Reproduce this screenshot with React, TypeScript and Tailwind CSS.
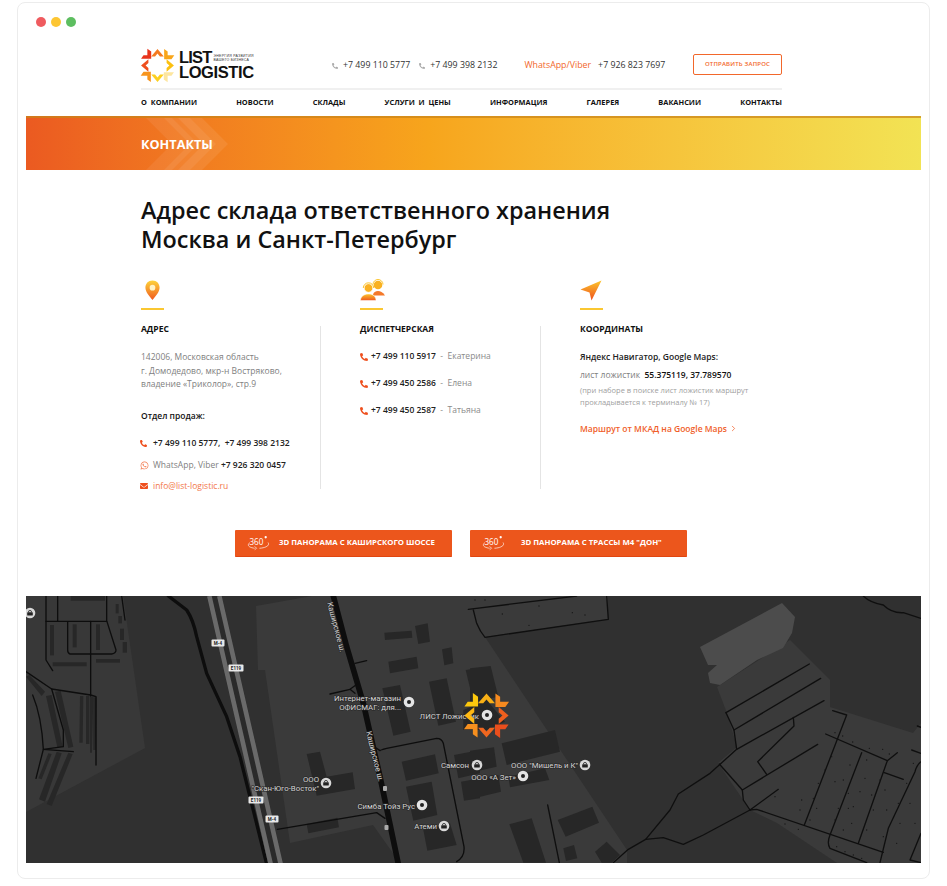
import { ChevronRight } from "lucide-react";
import { FaEnvelope, FaPhoneAlt, FaWhatsapp } from "react-icons/fa";

const chevron = "50,3 68,24 57,24 50,16 43,24 32,24";
const corner = "69,3 79,10 79,21 98,21 90,32 69,32";

// order: top, top-right, right, bottom-right, bottom, bottom-left, left, top-left
const headerColors = ["#f47a20", "#f9a51a", "#fcc010", "#fde6a0", "#fcd020", "#f7941d", "#ee4f1e", "#e8341c"];
const mapColors = ["#f9b016", "#f68a1f", "#ee5f1e", "#ea4e1c", "#ef661f", "#f68f1e", "#fdb813", "#fcc80d"];

const Sun = ({ colors, className }: { colors: string[]; className: string }) => (
  <svg viewBox="0 0 100 100" className={className}>
    {colors.map((c, i) => (
      <polygon
        key={i}
        points={i % 2 === 0 ? chevron : corner}
        fill={c}
        transform={`rotate(${i % 2 === 0 ? i * 45 : (i - 1) * 45} 50 50)`}
      />
    ))}
  </svg>
);

const PinIcon = () => (
  <svg viewBox="0 0 18 22" className="w-[17px] h-[21px] ml-[3px]">
    <defs>
      <linearGradient id="pin" x1="0" y1="0" x2="0" y2="1">
        <stop offset="0" stopColor="#fdd33a" />
        <stop offset="1" stopColor="#f0591e" />
      </linearGradient>
    </defs>
    <path d="M9 0.5C4.4 0.5 1.5 4 1.5 8c0 4.5 4.7 9.5 7.5 13 2.8-3.5 7.500-8.500 7.500-13 0-4-2.900-7.500-7.500-7.500z" fill="url(#pin)" />
    <circle cx="9" cy="8" r="3" fill="#fff3c4" />
  </svg>
);

const OperatorsIcon = () => (
  <svg viewBox="0 0 26 22" className="w-[26px] h-[22px]">
    <defs>
      <linearGradient id="op" x1="0" y1="0" x2="0" y2="1">
        <stop offset="0" stopColor="#fcc52c" />
        <stop offset="1" stopColor="#ef571d" />
      </linearGradient>
    </defs>
    <circle cx="18" cy="6" r="4.300" fill="#f9b120" />
    <path d="M13 5.500a5 5 0 0 1 10 0" fill="none" stroke="#fcc52c" strokeWidth="1" />
    <path d="M13 16c.5-3 2.500-4 5-4s4.500 1 7 4.500H13z" fill="#f4792a" />
    <circle cx="8.500" cy="9" r="4.300" fill="#fab122" stroke="#fff" strokeWidth=".7" />
    <path d="M3.300 9a5.200 5.200 0 0 1 10.400 0" fill="none" stroke="#fcc52c" strokeWidth="1" />
    <path d="M0.500 21.500c0-4 3.500-6.500 8-6.500s7.500 2.500 7.500 6.500z" fill="url(#op)" stroke="#fff" strokeWidth=".5" />
  </svg>
);

const ArrowIcon = () => (
  <svg viewBox="0 0 22 21" className="w-[22px] h-[21px]">
    <defs>
      <linearGradient id="arr" x1="0" y1="0" x2="0" y2="1">
        <stop offset="0" stopColor="#fcc52c" />
        <stop offset="1" stopColor="#ef4f1d" />
      </linearGradient>
    </defs>
    <path d="M21.500 0.500L0.500 9.500l9 3 2 8z" fill="url(#arr)" />
  </svg>
);

const Icon360 = () => (
  <svg viewBox="0 0 24 16" className="w-[23px] h-[16px]">
    <text x="2.500" y="10" fontSize="8.500" fontWeight="400" fill="#fff" fontFamily="'Open Sans', sans-serif">360</text>
    <circle cx="19.500" cy="2" r="1.200" fill="#fff" />
    <path d="M3 7.500C0 10 1 12.500 8 13.500M13 13.500c7-.5 11-3 9-6" fill="none" stroke="#fff" strokeWidth=".7" />
    <path d="M8 11.500l2 2-2 1.500" fill="none" stroke="#fff" strokeWidth=".7" />
  </svg>
);

const PhoneLine = ({ num, name }: { num: string; name: string }) => (
  <div className="flex items-center h-[27px]">
    <FaPhoneAlt className="w-[8px] h-[8px] text-[#ee4f1d]" />
    <span className="ml-[3px] text-[8.5px] font-semibold text-[#222]">{num}</span>
    <span className="text-[8.5px] text-[#8a8a8a] whitespace-pre">{"  -  " + name}</span>
  </div>
);

const ContactColumnTitle = ({ icon, title }: { icon: React.ReactNode; title: string }) => (
  <>
    <div className="h-[22px] flex items-center">{icon}</div>
    <div className="w-[23px] h-[2px] bg-[#fac731] mt-[7px]" />
    <div className="text-[8.500px] font-bold text-[#111] mt-[12px] leading-[14px]">{title}</div>
  </>
);

const block = "#272727";
const road = "#0d0d0d";

const leftBuildings = [
  "1153,128 1235,122 1237,143 1155,150",
  "1245,108 1283,100 1290,155 1255,162",
  "1326,178 1355,172 1360,220 1333,226",
  "1165,215 1250,200 1255,235 1170,250",
  "1147,295 1200,285 1232,425 1180,437",
  "1287,275 1340,265 1368,395 1315,407",
  "1397,240 1440,233 1440,330 1420,335",
  "1205,515 1305,493 1316,550 1218,572",
  "1218,590 1295,575 1312,675 1240,692",
  "1270,720 1350,700 1370,765 1282,782",
  "920,492 960,485 980,560 1058,547 1065,597 950,617",
  "920,702 1012,683 1017,712 925,730",
  "1362,495 1440,480 1440,550 1375,565",
  "1383,575 1440,565 1440,625 1392,632",
  "150,105 162,105 162,196 150,196",
  "218,103 230,103 230,172 218,172",
  "288,103 300,103 300,180 288,180",
  "158,217 260,217 260,229 158,229",
  "288,207 360,207 360,218 288,218",
  "347,42 356,42 356,70 347,70",
  "355,78 366,78 366,100 355,100",
  "360,116 372,116 372,150 360,150",
  "368,156 381,156 381,188 368,188",
  "212,18 315,18 315,32 212,32",
  "78,260 88,255 135,305 125,318",
  "138,318 155,315 188,470 172,472",
  "165,305 182,302 220,470 205,474",
  "240,318 250,318 248,458 238,458",
  "258,318 268,318 268,462 258,462",
  "270,320 280,320 276,488 270,488",
  "280,322 290,322 287,480 280,480",
  "145,490 155,492 125,568 115,565",
  "170,485 185,490 135,635 117,628",
  "205,488 218,492 155,648 140,642",
];

const rightBuildings = [
  "0,235 62,228 85,320 0,338",
  "95,460 255,420 270,485 110,525",
  "115,560 225,535 238,570 120,592",
  "0,570 85,555 93,605 0,628",
  "118,703 185,685 228,818 160,818",
  "263,690 367,650 387,698 287,740",
  "280,775 312,765 322,805 288,813",
  "375,785 410,755 450,795 425,818 395,818",
  "0,482 72,472 80,530 0,548",
  "-20,360 50,330 105,395 50,420 -20,420",
];

const rightRoads = [
  "M-5,58 L320,18",
  "M410,18 L415,88 L45,142 Q30,125 20,100 L10,60",
  "M233,645 L268,818",
  "M430,818 L475,778 L527,748 L600,660 L625,612 L720,550 L800,478 L1062,332",
  "M768,368 L1018,222",
  "M792,420 L1052,265",
  "M768,368 L792,420 L800,478",
  "M970,382 L972,408 L863,515 L890,553",
  "M748,522 L817,600 L1043,463",
  "M817,600 L820,630 L840,660 L925,598",
  "M527,748 L580,743 L640,763 L700,735 L840,660",
  "M840,660 L860,658 L1240,787",
  "M1088,362 L1130,375 L1003,705",
  "M1067,432 L1252,512 L1165,760",
  "M1175,488 L1080,735 Q1070,760 1080,775 L1190,818",
  "M1252,512 L1282,488",
  "M1243,548 L1300,568",
  "M1325,480 L1353,490",
  "M1353,515 Q1340,525 1335,545 L1255,715 L1230,818",
  "M1342,408 L1353,412",
  "M1353,730 L1320,810 L1353,818",
  "M1180,18 Q1200,38 1240,45 Q1265,70 1300,68 L1353,85",
];

const rightDots: number[][] = [
  [15, 30], [45, 30], [97, 72], [207, 48], [307, 68], [345, 75], [177, 106],
  [915, 620], [995, 630], [990, 660], [945, 702], [985, 718], [1095, 428], [1118, 438], [1148, 456],
  [1198, 475], [1238, 478], [1258, 492], [1085, 500], [1065, 540], [1045, 580], [1030, 625], [1040, 655], [1020, 690],
  [1140, 525], [1120, 570], [1095, 575], [1135, 610], [1105, 655], [1135, 655], [1095, 690], [1120, 720],
  [1190, 510], [1185, 565], [1170, 605], [1150, 650], [1145, 700], [1205, 615], [1230, 570], [1245, 600], [1210, 660],
  [1190, 720], [1250, 660], [1240, 740], [1285, 640], [1310, 580], [1330, 520], [1320, 640], [1290, 700], [1335, 700],
  [1100, 770], [1125, 785], [1150, 795], [1175, 805], [1280, 760],
];

const MapSign = ({ x, y, w, label }: { x: number; y: number; w: number; label: string }) => (
  <g>
    <rect x={x - w / 2} y={y - 3.500} width={w} height={7} rx="1" fill="#e8e8e8" />
    <text x={x} y={y + 1.800} textAnchor="middle" fontSize="4.500" fontWeight="700" fill="#222">{label}</text>
  </g>
);

const MapDot = ({ x, y }: { x: number; y: number }) => (
  <g>
    <circle cx={x} cy={y} r="5.300" fill="#e4e4e4" />
    <circle cx={x} cy={y} r="2" fill="#222" />
  </g>
);

const MapBag = ({ x, y }: { x: number; y: number }) => (
  <g>
    <circle cx={x} cy={y} r="5.300" fill="#d8d8d8" />
    <rect x={x - 2.800} y={y - 0.800} width="5.600" height="3.400" rx=".6" fill="#222" />
    <path d={`M${x - 1.600} ${y - 0.800}a1.600 1.800 0 0 1 3.200 0`} fill="none" stroke="#222" strokeWidth=".8" />
  </g>
);

const MapLabel = ({ x, y, anchor, rotate, children }: { x: number; y: number; anchor?: "start" | "middle" | "end"; rotate?: number; children: string }) => (
  <text
    x={x}
    y={y}
    textAnchor={anchor ?? "end"}
    fontSize="7.800"
    fill="#d4d4d4"
    stroke="#262626"
    strokeWidth="1.200"
    paintOrder="stroke"
    transform={rotate ? `rotate(${rotate} ${x} ${y})` : undefined}
  >
    {children}
  </text>
);

const MapDrawing = () => (
  <svg viewBox="26 596 895 267" className="block w-full h-full" fontFamily="Roboto, sans-serif">
    <rect x="26" y="596" width="895" height="267" fill="#303030" />
    {/* land areas */}
    <polygon points="26,596 123,596 145,748 26,812" fill="#383838" />
    <polygon points="256,606 312,596 608,596 608,619 485,637 627,850 627,863 400,863 373,825 290,843 265,670 258,670" fill="#3a3a3a" />
    <polygon points="790,640 830,680 830,707 913,733 921,723 921,863 837,863 777,823 750,810 718,763 737,747 727,713 717,687" fill="#3a3a3a" />
    <polygon points="700,647 782,603 795,617 792,633 783,648 757,660 720,685 710,683 708,673 717,665 708,665" fill="#4c4c4c" />

    <g transform="translate(0 590) scale(.33333)">
      {leftBuildings.map((p) => (
        <polygon key={p} points={p} fill={block} />
      ))}
      <g fill="none" stroke={road} strokeLinecap="round" strokeLinejoin="round">
        <path d="M505,18 L560,60 Q580,90 590,140 L620,250 L680,380 L720,500 L800,822" strokeWidth="10" />
        <path d="M1000,18 L1040,170 L1090,340 L1140,560 L1195,822" strokeWidth="17" />
        <g strokeWidth="4">
          <path d="M1065,220 L1100,212" />
          <path d="M990,312 L1050,298 L1075,280" />
          <path d="M1050,298 L1065,310" />
          <path d="M832,718 L1130,668 L1155,685" />
          <path d="M1115,465 L1140,482 Q1140,480 1160,475 L1310,445 Q1325,445 1330,460 L1392,770 Q1395,800 1370,815" />
          <path d="M138,18 V210 L158,242" />
          <path d="M173,18 V92" />
          <path d="M138,94 H320" />
          <path d="M320,18 V92 L348,180 Q348,190 335,192 H210 Q203,190 203,180 V95" />
          <path d="M272,94 V318" />
          <path d="M365,18 L375,90" />
          <path d="M78,245 L155,297 L272,315 L288,320 V525" />
          <path d="M155,297 L190,420 L190,470 L130,478 L108,565" />
          <path d="M98,315 Q125,380 130,478 L220,485" />
        </g>
      </g>
      {/* highway */}
      <path d="M643,18 L827,822" stroke="#2a2a2a" strokeWidth="44" fill="none" />
      <path d="M628,18 L812,822" stroke="#6a6a6a" strokeWidth="14" fill="none" />
      <path d="M658,18 L842,822" stroke="#6a6a6a" strokeWidth="14" fill="none" />
    </g>

    <g transform="translate(470 590) scale(.33333)">
      {rightBuildings.map((p) => (
        <polygon key={p} points={p} fill={block} />
      ))}
      <g fill="none" stroke="#0f0f0f" strokeWidth="4" strokeLinecap="round" strokeLinejoin="round">
        {rightRoads.map((d) => (
          <path key={d} d={d} />
        ))}
      </g>
      {rightDots.map(([x, y]) => (
        <circle key={`${x}-${y}`} cx={x} cy={y} r="2" fill="#151515" />
      ))}
    </g>

    <MapSign x={218} y={643} w={13} label="M-4" />
    <MapSign x={236} y={668} w={15} label="E119" />
    <MapSign x={256} y={800} w={15} label="E119" />
    <MapSign x={272} y={819} w={13} label="M-4" />
    <g>
      <rect x="383" y="786" width="4" height="5" rx="1" fill="#aaa" />
      <rect x="384.500" y="825" width="4" height="5" rx="1" fill="#aaa" />
    </g>

    <MapLabel x={327} y={603} anchor="start" rotate={75}>Каширское ш.</MapLabel>
    <MapLabel x={366} y={732} anchor="start" rotate={76}>Каширское ш.</MapLabel>
    <MapLabel x={401} y={701}>Интернет-магазин</MapLabel>
    <MapLabel x={401} y={710}>ОФИСМАГ: для...</MapLabel>
    <MapLabel x={479} y={719}>ЛИСТ Ложистик</MapLabel>
    <MapLabel x={469} y={768}>Самсон</MapLabel>
    <MapLabel x={578} y={768}>ООО "Мишель и К"</MapLabel>
    <MapLabel x={516} y={780}>ООО «А Зет»</MapLabel>
    <MapLabel x={319} y={782}>ООО</MapLabel>
    <MapLabel x={319} y={791}>"Скан-Юго-Восток"</MapLabel>
    <MapLabel x={415} y={809}>Симба Тойз Рус</MapLabel>
    <MapLabel x={437} y={829}>Атеми</MapLabel>
    <MapDot x={409} y={702} />
    <MapDot x={487} y={715} />
    <MapDot x={523} y={776} />
    <MapDot x={422} y={805} />
    <MapBag x={326} y={783} />
    <MapBag x={477} y={765} />
    <MapBag x={585} y={765} />
    <MapBag x={444} y={826} />
    <MapBag x={30} y={613} />
  </svg>
);

export default function App() {
  return (
    <div className="w-[947px] h-[886px] bg-white pt-[2px] pl-[17px] overflow-hidden font-['Open_Sans',sans-serif]">
      <div className="w-[913px] h-[877px] border border-[#ececec] rounded-[8px] px-[8px] relative">
        {/* window dots */}
        <div className="flex gap-[5px] ml-[10px] pt-[14px] h-[38px]">
          <div className="w-[10px] h-[10px] rounded-full bg-[#ef5b5f]" />
          <div className="w-[10px] h-[10px] rounded-full bg-[#fdc633]" />
          <div className="w-[10px] h-[10px] rounded-full bg-[#5dbe60]" />
        </div>

        {/* header */}
        <div className="ml-[115px] w-[641px]">
          <div className="flex items-start h-[47px] pt-[7px]">
            <Sun colors={headerColors} className="w-[35px] h-[35px] shrink-0 ml-[-1px]" />
            <div className="ml-[4px] mt-[2px] font-['Liberation_Sans',sans-serif] font-bold text-[#111] text-[16.500px] leading-[15px] w-[76px] shrink-0">
              <div className="flex items-center">
                <span className="tracking-[-0.8px]">LIST</span>
                <div className="ml-[2px] text-[3.500px] leading-[4px] tracking-[.25px] font-normal whitespace-nowrap text-[#333]">
                  <div>ЭНЕРГИЯ РАЗВИТИЯ</div>
                  <div>ВАШЕГО БИЗНЕСА</div>
                </div>
              </div>
              <div className="tracking-[-0.4px]">LOGISTIC</div>
            </div>
            <div className="ml-[77px] flex items-center h-[24px] mt-[6px] text-[8.800px] text-[#333] whitespace-nowrap">
              <FaPhoneAlt className="w-[6px] h-[6px] text-[#aaa] mr-[5px]" />
              <span>+7 499 110 5777</span>
              <FaPhoneAlt className="w-[6px] h-[6px] text-[#aaa] ml-[9px] mr-[5px]" />
              <span>+7 499 398 2132</span>
              <span className="ml-[27px] text-[#f2672b]">WhatsApp/Viber</span>
              <span className="ml-[7px]">+7 926 823 7697</span>
            </div>
            <div className="ml-auto mt-[6px] w-[89px] h-[21px] border-[1.500px] border-[#f2672b] rounded-[2px] flex items-center justify-center text-[6px] font-semibold text-[#f2672b] tracking-[.2px] whitespace-nowrap">
              ОТПРАВИТЬ ЗАПРОС
            </div>
          </div>
          <div className="h-[2px] bg-[#f0f0f0]" />
          <div className="flex justify-between items-center h-[26px] text-[7.400px] font-bold text-[#111] whitespace-pre">
            <span>О  КОМПАНИИ</span>
            <span>НОВОСТИ</span>
            <span>СКЛАДЫ</span>
            <span>УСЛУГИ  И  ЦЕНЫ</span>
            <span>ИНФОРМАЦИЯ</span>
            <span>ГАЛЕРЕЯ</span>
            <span>ВАКАНСИИ</span>
            <span>КОНТАКТЫ</span>
          </div>
        </div>

        {/* banner */}
        <div className="relative h-[54px] bg-gradient-to-r from-[#eb5a21] via-[#f7a51c] via-45% to-[#f2e354] border-t-[2px] border-t-[#c9851a]/70 overflow-hidden">
          <svg viewBox="0 0 120 54" className="absolute left-[115px] top-[-1px] w-[120px] h-[54px]">
            <polygon points="4,0 30,0 57,27 30,54 4,54 31,27" fill="#fff" fillOpacity=".07" />
            <polygon points="22,0 48,0 75,27 48,54 22,54 49,27" fill="#fff" fillOpacity=".07" />
            <polygon points="36,0 60,0 87,27 60,54 36,54 63,27" fill="#fff" fillOpacity=".08" />
          </svg>
          <div className="relative ml-[115px] h-full flex items-center text-[12.700px] font-bold text-white leading-none">КОНТАКТЫ</div>
        </div>

        {/* content */}
        <div className="ml-[115px] w-[641px]">
          <h1 className="mt-[26px] text-[23.400px] leading-[29px] font-semibold text-[#111]">
            Адрес склада ответственного хранения
            <br />
            Москва и Санкт-Петербург
          </h1>

          <div className="flex mt-[25px] h-[210px]">
            <div className="w-[179px] shrink-0">
              <ContactColumnTitle icon={<PinIcon />} title="АДРЕС" />
              <div className="mt-[14px] text-[8.500px] leading-[13.500px] text-[#808080]">
                142006, Московская область
                <br />
                г. Домодедово, мкр-н Востряково,
                <br />
                владение «Триколор», стр.9
              </div>
              <div className="mt-[18px] text-[8.500px] font-semibold text-[#111] leading-[13px]">Отдел продаж:</div>
              <div className="mt-[15px] flex items-center h-[13px] ml-[-1px]">
                <FaPhoneAlt className="w-[7px] h-[7px] text-[#ee4f1d] mr-[6px]" />
                <span className="text-[8.500px] font-semibold text-[#222] whitespace-pre">+7 499 110 5777,  +7 499 398 2132</span>
              </div>
              <div className="mt-[9px] flex items-center h-[13px] ml-[-1px]">
                <FaWhatsapp className="w-[9px] h-[9px] text-[#f2774a] mr-[4px]" />
                <span className="text-[8.500px] text-[#808080] whitespace-pre">WhatsApp, Viber </span>
                <span className="text-[8.500px] font-semibold text-[#222]">+7 926 320 0457</span>
              </div>
              <div className="mt-[8px] flex items-center h-[13px] ml-[-1px]">
                <FaEnvelope className="w-[8px] h-[8px] text-[#ee4f1d] mr-[5px]" />
                <span className="text-[8.500px] text-[#f2774a]">info@list-logistic.ru</span>
              </div>
            </div>

            <div className="w-[220px] shrink-0 relative pl-[40px]">
              <div className="absolute left-0 top-[47px] bottom-[0px] w-[1px] bg-[#e4e4e4]" />
              <ContactColumnTitle icon={<OperatorsIcon />} title="ДИСПЕТЧЕРСКАЯ" />
              <div className="mt-[7px]">
                <PhoneLine num="+7 499 110 5917" name="Екатерина" />
                <PhoneLine num="+7 499 450 2586" name="Елена" />
                <PhoneLine num="+7 499 450 2587" name="Татьяна" />
              </div>
            </div>

            <div className="flex-1 relative pl-[40px]">
              <div className="absolute left-0 top-[47px] bottom-[0px] w-[1px] bg-[#e4e4e4]" />
              <ContactColumnTitle icon={<ArrowIcon />} title="КООРДИНАТЫ" />
              <div className="mt-[14px] text-[8.500px] font-semibold text-[#222] leading-[13px]">Яндекс Навигатор, Google Maps:</div>
              <div className="mt-[6px] flex items-center h-[13px] whitespace-pre">
                <span className="text-[8.500px] text-[#808080]">лист ложистик  </span>
                <span className="text-[8.500px] font-semibold text-[#111]">55.375119, 37.789570</span>
              </div>
              <div className="mt-[2px] text-[7.500px] leading-[12px] text-[#a0a0a0]">
                (при наборе в поиске лист ложистик маршрут
                <br />
                прокладывается к терминалу № 17)
              </div>
              <div className="mt-[14px] flex items-center text-[8.500px] font-semibold text-[#f0602a] leading-[13px]">
                Маршрут от МКАД на Google Maps
                <ChevronRight className="w-[9px] h-[9px] ml-[2px]" strokeWidth={2} />
              </div>
            </div>
          </div>
        </div>

        {/* panorama buttons */}
        <div className="flex gap-[18px] mt-[41px] ml-[209px]">
          <div className="w-[217px] h-[27px] bg-[#ec561c] rounded-[1px] border-b border-b-[#e04510] flex items-center text-white text-[7.800px] font-bold whitespace-nowrap pl-[12px]">
            <Icon360 />
            <span className="ml-[9px]">3D ПАНОРАМА С КАШИРСКОГО ШОССЕ</span>
          </div>
          <div className="w-[217px] h-[27px] bg-[#ec561c] rounded-[1px] border-b border-b-[#e04510] flex items-center text-white text-[7.800px] font-bold whitespace-nowrap pl-[12px]">
            <Icon360 />
            <span className="ml-[16px]">3D ПАНОРАМА С ТРАССЫ М4 "ДОН"</span>
          </div>
        </div>

        {/* map */}
        <div className="relative mt-[39px] h-[267px] overflow-hidden">
          <MapDrawing />
          <Sun colors={mapColors} className="absolute left-[437px] top-[96px] w-[47px] h-[47px]" />
        </div>
      </div>
    </div>
  );
}
